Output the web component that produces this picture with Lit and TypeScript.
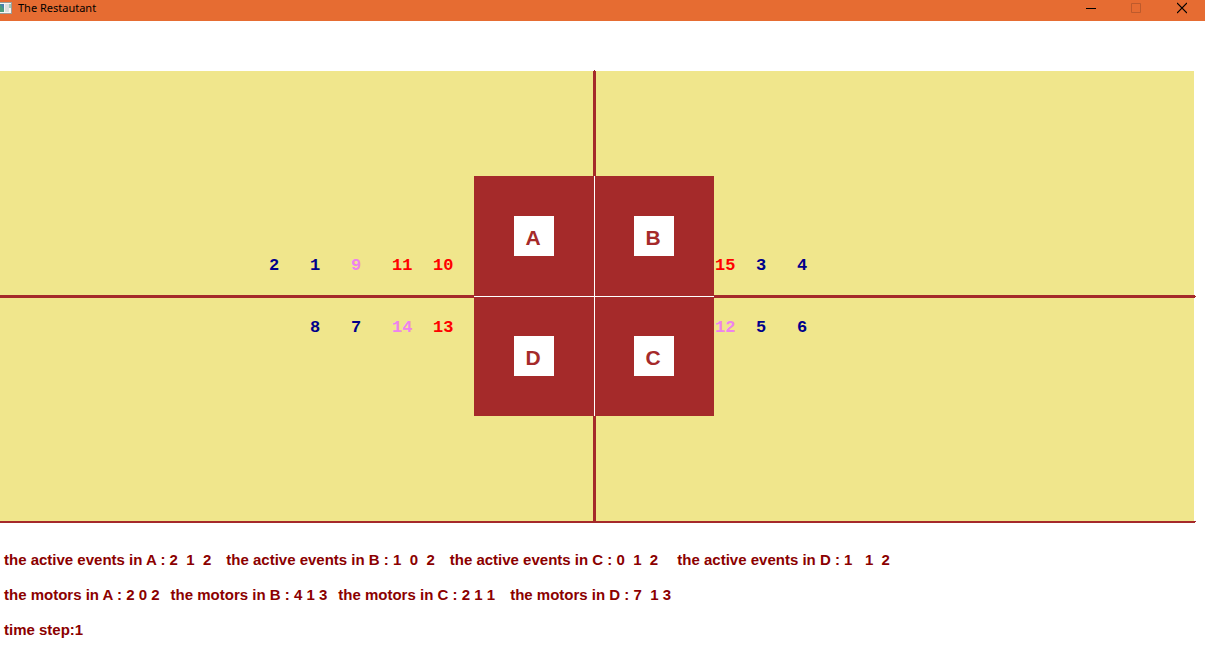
import { LitElement, html, css } from "lit";
import { customElement, property } from "lit/decorators.js";
import { classMap } from "lit/directives/class-map.js";

type Kind = "plain" | "waiting" | "urgent";
interface Stop {
  id: number;
  kind: Kind;
}
const stop = (id: number, kind: Kind = "plain"): Stop => ({ id, kind });

const LANES: Record<string, Stop[]> = {
  A: [stop(2), stop(1), stop(9, "waiting"), stop(11, "urgent"), stop(10, "urgent")],
  B: [stop(15, "urgent"), stop(3), stop(4)],
  C: [stop(12, "waiting"), stop(5), stop(6)],
  D: [stop(8), stop(7), stop(14, "waiting"), stop(13, "urgent")],
};

const EVENTS = [
  "the active events in A : 2  1  2",
  "the active events in B : 1  0  2",
  "the active events in C : 0  1  2 ",
  "the active events in D : 1   1  2",
];
const MOTORS = [
  "the motors in A : 2 0 2",
  "the motors in B : 4 1 3",
  "the motors in C : 2 1 1 ",
  "the motors in D : 7  1 3",
];

@customElement("window-bar")
export class WindowBar extends LitElement {
  @property() caption = "";

  static styles = css`
    :host {
      display: flex;
      align-items: flex-start;
      height: 21px;
      background: #e66c32;
      color: #000;
    }
    .icon {
      width: 13px;
      height: 16px;
      flex: none;
    }
    .caption {
      flex: 1;
      margin: 0;
      padding-left: 5px;
      font: 400 11px/16px "Noto Sans", "Open Sans", sans-serif;
    }
    button {
      width: 46px;
      height: 16px;
      padding: 0;
      border: 0;
      background: none;
      color: inherit;
    }
    button svg {
      display: block;
      margin: 0 auto;
    }
    button:disabled {
      color: #bd5a2c;
    }
  `;

  render() {
    return html`
      <svg class="icon" viewBox="0 0 13 16" aria-hidden="true">
        <rect x="-4" y="2" width="16" height="12" fill="#9c9c98" />
        <rect x="-3" y="3" width="14" height="10" fill="#f6f6f4" />
        <rect x="-3" y="4" width="7" height="8" fill="#4b9c7c" />
        <path d="M0 4h4v5z" fill="#4a7fae" />
        <rect x="5" y="4" width="4" height="8" fill="#dedede" />
        <rect x="9" y="4" width="2" height="4" fill="#9fcabb" />
      </svg>
      <h1 class="caption">${this.caption}</h1>
      <button aria-label="Minimize">
        <svg width="10" height="16" viewBox="0 0 10 16" overflow="visible">
          <path d="M1 8h10v1H1z" />
        </svg>
      </button>
      <button aria-label="Maximize" disabled>
        <svg width="10" height="16" viewBox="0 0 10 16">
          <path d="M.5 3.500h9v9h-9z" fill="none" stroke="currentColor" />
        </svg>
      </button>
      <button aria-label="Close">
        <svg width="10" height="16" viewBox="0 0 10 16">
          <path d="M0 3l10 10M10 3L0 13" fill="none" stroke="currentColor" stroke-width="1.200" />
        </svg>
      </button>
    `;
  }
}

@customElement("city-map")
export class CityMap extends LitElement {
  static styles = css`
    :host {
      position: relative;
      display: grid;
      grid-template-columns: 1fr 240px 1fr;
      grid-template-rows: 105px 240px 105px;
      background: #f0e68c;
      border-bottom: 2px solid #a52a2a;
    }
    /* Rounded-off road ends that poke out over the edge of the map. */
    :host::after {
      content: "";
      position: absolute;
      left: 100%;
      top: 100%;
      width: 1px;
      height: 2px;
      background: #a52a2a;
      box-shadow: 1px 0 #a52a2a;
      clip-path: polygon(0 0, 2px 0, 2px 1px, 1px 1px, 1px 2px, 0 2px);
    }
    .avenue {
      position: relative;
      grid-column: 2;
      width: 3px;
      margin-left: 119px;
      background: #a52a2a;
    }
    .avenue::before {
      content: "";
      position: absolute;
      left: 1px;
      top: -1px;
      width: 1px;
      height: 1px;
      background: #a52a2a;
    }
    .avenue.south::before {
      display: none;
    }
    .side {
      display: grid;
      grid-template-rows: 119px 3px 118px;
    }
    .side.first {
      grid-column: 1;
    }
    .street {
      position: relative;
      background: #a52a2a;
    }
    .last .street::after {
      content: "";
      position: absolute;
      left: 100%;
      top: 0;
      width: 2px;
      height: 3px;
      background: #a52a2a;
      clip-path: polygon(0 0, 1px 0, 1px 1px, 2px 1px, 2px 2px, 1px 2px, 1px 3px, 0 3px);
    }
    .lane {
      display: flex;
      margin: 0;
      padding: 0;
      list-style: none;
      font: 700 17px/20px "Liberation Mono", "Courier New", monospace;
      color: #00008b;
    }
    .lane li {
      width: 41px;
    }
    .upper {
      align-items: flex-end;
      padding-bottom: 19px;
    }
    .lower {
      align-items: flex-start;
      padding-top: 20px;
    }
    .west {
      justify-content: flex-end;
    }
    .east {
      padding-left: 1px;
    }
    .waiting {
      color: #ee82ee;
    }
    .urgent {
      color: #f00;
    }
    .center {
      display: grid;
      grid-template-columns: 120px 119px;
      grid-template-rows: 120px 119px;
      gap: 1px;
      background: #fff;
    }
    .block {
      padding: 40px 0 0 40px;
      background: #a52a2a;
    }
    .block.right {
      padding-left: 39px;
    }
    .block.bottom {
      padding-top: 39px;
    }
    .sign {
      display: block;
      width: 38px;
      height: 40px;
      padding-right: 2px;
      background: #fff;
      color: #a52a2a;
      font: 700 21px/43px "Liberation Sans", Arial, sans-serif;
      text-align: center;
    }
  `;

  private lane(name: string, place: string) {
    return html`<ul class="lane ${place}">
      ${LANES[name].map((s) => html`<li class=${classMap({ [s.kind]: true })}>${s.id}</li>`)}
    </ul>`;
  }

  render() {
    return html`
      <div class="avenue"></div>
      <div class="side first">
        ${this.lane("A", "upper west")}
        <div class="street"></div>
        ${this.lane("D", "lower west")}
      </div>
      <div class="center">
        <div class="block"><span class="sign">A</span></div>
        <div class="block right"><span class="sign">B</span></div>
        <div class="block bottom"><span class="sign">D</span></div>
        <div class="block right bottom"><span class="sign">C</span></div>
      </div>
      <div class="side last">
        ${this.lane("B", "upper east")}
        <div class="street"></div>
        ${this.lane("C", "lower east")}
      </div>
      <div class="avenue south"></div>
    `;
  }
}

@customElement("app-root")
export class AppRoot extends LitElement {
  static styles = css`
    :host {
      display: block;
      min-height: 100vh;
      overflow: hidden;
      background: #fff;
    }
    .map {
      margin: 50px 11px 19px -6px;
    }
    .status {
      padding-left: 4px;
      color: #8b0000;
      font: 700 15px/35px "Liberation Sans", Arial, sans-serif;
    }
    .status p {
      display: flex;
      margin: 0;
      white-space: pre;
    }
    .events {
      gap: 15px;
    }
    .motors {
      gap: 11px;
    }
  `;

  render() {
    return html`
      <window-bar caption="The Restautant"></window-bar>
      <city-map class="map"></city-map>
      <section class="status">
        <p class="events">${EVENTS.map((t) => html`<span>${t}</span>`)}</p>
        <p class="motors">${MOTORS.map((t) => html`<span>${t}</span>`)}</p>
        <p>time step:1</p>
      </section>
    `;
  }
}
